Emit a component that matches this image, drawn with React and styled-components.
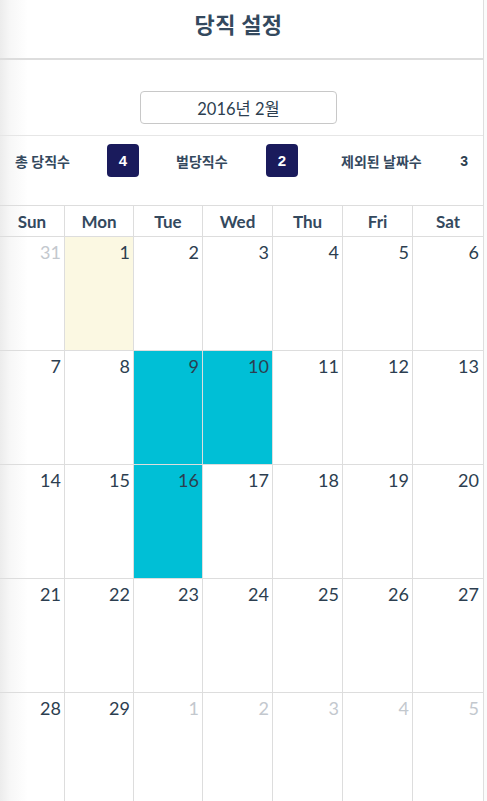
import React from "react";
import styled, { createGlobalStyle } from "styled-components";

const Global = createGlobalStyle`
  html, body { margin: 0; padding: 0; background: #fbfbfb; }
  body { font-family: "Lato", "Noto Sans CJK KR", sans-serif; color: #2c3e50; }
  * { box-sizing: border-box; }
`;

const Page = styled.div`
  width: 484px;
  height: 801px;
  overflow: hidden;
  border-right: 1px solid #dedede;
  background: linear-gradient(to right, #ececec 0px, #f7f7f7 10px, #ffffff 28px);
  display: flex;
  flex-direction: column;
`;

const Header = styled.header`
  height: 60px;
  flex: none;
  border-bottom: 2px solid #dddddd;
  display: flex;
  align-items: center;
  justify-content: center;
  padding: 0 6px 12px 0;
`;

const Title = styled.h1`
  margin: 0;
  font-family: "Lato", "Noto Sans CJK KR", sans-serif;
  font-size: 22px;
  font-weight: 700;
  color: #34495e;
  letter-spacing: 0.3px;
`;

const MonthBar = styled.div`
  height: 76px;
  flex: none;
  border-bottom: 1px solid #e6e6e6;
  display: flex;
  justify-content: center;
  padding: 31px 6px 0 0;
`;

const MonthButton = styled.div`
  width: 197px;
  height: 33px;
  border: 1px solid #c8c8c8;
  border-radius: 4px;
  background: #fff;
  display: flex;
  align-items: center;
  justify-content: center;
  font-size: 16.5px;
  color: #2c3e50;
`;

const Stats = styled.div`
  height: 69px;
  flex: none;
  display: grid;
  grid-template-columns: 92px 69px 90px 75px 115px 1fr;
  align-items: start;
  padding-top: 8px;
`;

const StatCell = styled.div`
  height: 33px;
  display: flex;
  align-items: center;
  justify-content: ${(p) => (p.$end ? "flex-end" : "flex-start")};
  padding: ${(p) => (p.$end ? "0 15px 0 0" : "0 0 0 15px")};
`;

const Label = styled.span`
  font-size: 14px;
  font-weight: 700;
  color: #34495e;
  white-space: nowrap;
`;

const Badge = styled.span`
  width: 32px;
  height: 33px;
  border-radius: 4px;
  background: #1a1b5c;
  color: #fff;
  font-family: "Liberation Sans", "Lato", sans-serif;
  font-weight: 700;
  font-size: 15px;
  display: flex;
  align-items: center;
  justify-content: center;
`;

const PlainNum = styled.span`
  font-family: "Liberation Sans", "Lato", sans-serif;
  font-size: 14px;
  font-weight: 700;
  color: #2c3e50;
`;

const Grid = styled.div`
  flex: 1;
  display: grid;
  grid-template-columns: 64px 69px 69px 70px 70px 70px 1fr;
  grid-template-rows: 31px repeat(5, 114px);
`;

const DayName = styled.div`
  border-top: 1px solid #dddddd;
  border-left: ${(p) => (p.$first ? "none" : "1px solid #dddddd")};
  display: flex;
  align-items: center;
  justify-content: center;
  font-size: 17px;
  font-weight: 700;
  color: #34495e;
`;

const Cell = styled.div`
  border-top: 1px solid #dddddd;
  border-left: ${(p) => (p.$first ? "none" : "1px solid #dddddd")};
  background: ${(p) =>
    p.$duty ? "#00bfd6" : p.$today ? "#fbf8e2" : "transparent"};
  text-align: right;
  padding: 5px ${(p) => (p.$last ? 4 : 3)}px 0 0;
  font-size: 18px;
  line-height: 1.2;
  color: ${(p) => (p.$muted ? "#c3c8ce" : "#2c3e50")};
`;

const days = ["Sun", "Mon", "Tue", "Wed", "Thu", "Fri", "Sat"];

const weeks = [
  [31, 1, 2, 3, 4, 5, 6],
  [7, 8, 9, 10, 11, 12, 13],
  [14, 15, 16, 17, 18, 19, 20],
  [21, 22, 23, 24, 25, 26, 27],
  [28, 29, 1, 2, 3, 4, 5],
];

const duty = new Set(["1-2", "1-3", "2-2"]);

export default function App() {
  return (
    <>
      <Global />
      <Page>
        <Header>
          <Title>당직 설정</Title>
        </Header>
        <MonthBar>
          <MonthButton>2016년 2월</MonthButton>
        </MonthBar>
        <Stats>
          <StatCell><Label>총 당직수</Label></StatCell>
          <StatCell><Badge>4</Badge></StatCell>
          <StatCell><Label>벌당직수</Label></StatCell>
          <StatCell><Badge>2</Badge></StatCell>
          <StatCell><Label>제외된 날짜수</Label></StatCell>
          <StatCell $end><PlainNum>3</PlainNum></StatCell>
        </Stats>
        <Grid>
          {days.map((d, i) => (
            <DayName key={d} $first={i === 0}>{d}</DayName>
          ))}
          {weeks.map((w, wi) =>
            w.map((n, di) => {
              const muted = (wi === 0 && di === 0) || (wi === 4 && di >= 2);
              return (
                <Cell
                  key={`${wi}-${di}`}
                  $first={di === 0}
                  $last={di === 6}
                  $muted={muted}
                  $today={wi === 0 && di === 1}
                  $duty={duty.has(`${wi}-${di}`)}
                >
                  {n}
                </Cell>
              );
            })
          )}
        </Grid>
      </Page>
    </>
  );
}
